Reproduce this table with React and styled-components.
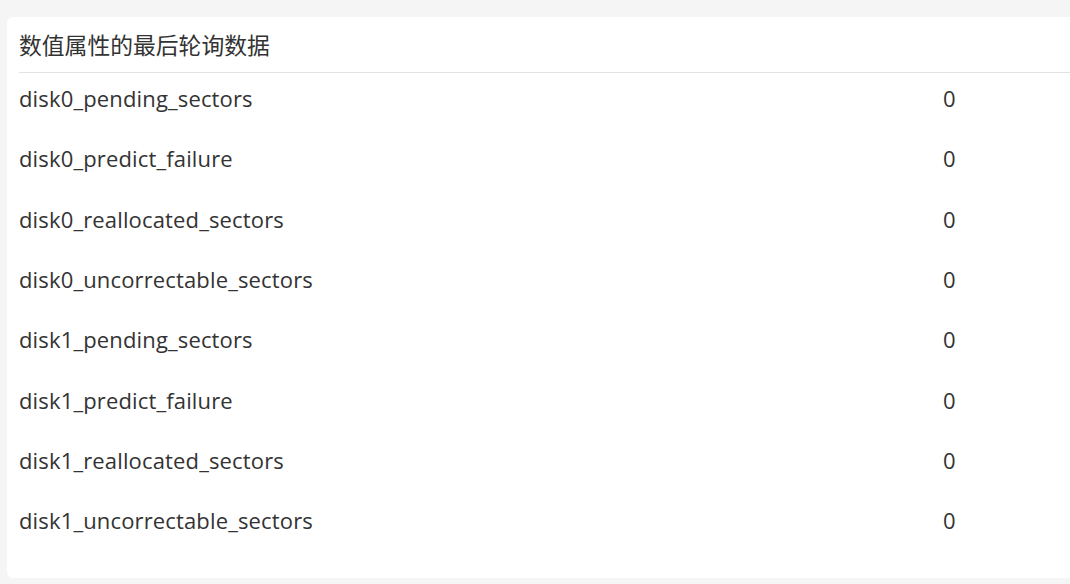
import React from 'react';
import styled, { createGlobalStyle } from 'styled-components';

const GlobalStyle = createGlobalStyle`
    html, body {
        margin: 0;
        padding: 0;
        background: #f5f5f5;
    }
    body {
        font-family: 'Open Sans', 'Noto Sans CJK SC', sans-serif;
        color: #333;
    }
`;

const Page = styled.div`
    padding: 17px 0 6px 7px;
`;

const Card = styled.div`
    background: #fff;
    border-radius: 6px 0 0 6px;
    padding: 0 0 13px 12px;
    height: 561px;
    box-sizing: border-box;
`;

const Title = styled.div`
    font-size: 22.8px;
    line-height: 55px;
    height: 55px;
    border-bottom: 1px solid #e2e2e2;
    font-family: 'Noto Sans CJK SC', sans-serif;
    color: #333;
`;

const Row = styled.div`
    display: grid;
    grid-template-columns: 924px 1fr;
    height: 60.3px;
    box-sizing: border-box;
    padding-bottom: 10px;
    align-items: center;
    font-size: 22px;
    letter-spacing: 0.15px;
    color: #333;
`;

const Metric = styled.span``;

const Value = styled.span``;

const rows = [
    'disk0_pending_sectors',
    'disk0_predict_failure',
    'disk0_reallocated_sectors',
    'disk0_uncorrectable_sectors',
    'disk1_pending_sectors',
    'disk1_predict_failure',
    'disk1_reallocated_sectors',
    'disk1_uncorrectable_sectors',
];

const App = () => (
    <>
        <GlobalStyle />
        <Page>
            <Card>
                <Title>数值属性的最后轮询数据</Title>
                {rows.map(name => (
                    <Row key={name}>
                        <Metric>{name}</Metric>
                        <Value>0</Value>
                    </Row>
                ))}
            </Card>
        </Page>
    </>
);

export default App;
